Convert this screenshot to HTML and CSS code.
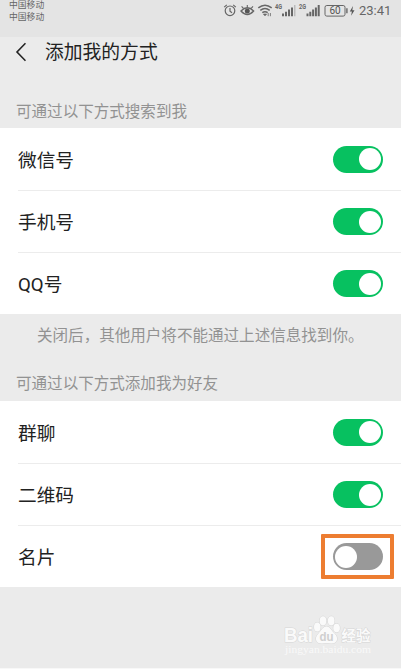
FILE: index.html
```html
<!DOCTYPE html>
<html lang="zh-CN">
<head>
  <meta charset="UTF-8" />
  <meta name="viewport" content="width=device-width, initial-scale=1.0" />
  <title>添加我的方式</title>
  <link rel="stylesheet" href="styles.css">
</head>
<body>

  <div class="status-bar">
    <div class="carrier">
      <div>中国移动</div>
      <div>中国移动</div>
    </div>
    <svg class="status-icons" width="134" height="18" viewBox="0 0 134 18" fill="none" stroke="#666">
      <!-- alarm -->
      <circle cx="7" cy="9.8" r="4.8" stroke-width="1.2" />
      <path d="M7 7v3.2l2 1.6M1.2 6.1l2.6-2.2M12.8 6.1l-2.6-2.2" stroke-width="1.2" />
      <!-- eye -->
      <path d="M18 10q6.3-6.5 12.6 0q-6.3 7-12.6 0z" stroke-width="1.4" />
      <circle cx="24.3" cy="10" r="2.5" fill="#555" stroke="none" />
      <path d="M24.3 6.5V4M20.4 7.3L18.6 5.3M28.2 7.3L30 5.3" stroke-width="1.1" />
      <!-- wifi -->
      <path d="M35.3 6.9q6.7-5.4 13.4 0M37.3 9.3q4.7-3.6 9.4 0M39.3 11.7q2.7-2 5.4 0" stroke-width="1.5" />
      <path d="M42 14.8l-1.500-1.700h3zM45.200 12v3.200M47.400 12v3.200" fill="#666" stroke-width=".8" />
      <!-- signal 4G / 2G -->
      <g fill="#666" stroke="none">
        <text class="net" x="52" y="7.8" textLength="7" lengthAdjust="spacingAndGlyphs">4G</text>
        <path d="M59 12.600h2v2.700h-2zM62 10.800h2v4.500h-2zM65 8.600h2v6.700h-2zM68 6.500h2v8.800h-2z" />
        <path class="weak" d="M71 4h1.500v11.300H71z" />
        <text class="net" x="76" y="7.8" textLength="7" lengthAdjust="spacingAndGlyphs">2G</text>
        <path d="M83.500 12.600h2v2.700h-2zM86.300 10.800h2v4.500h-2zM89.100 8.600h2v6.700h-2zM91.900 6.500h2v8.800h-2zM94.700 4h2v11.300h-2z" />
      </g>
      <!-- battery -->
      <rect x="102" y="4.500" width="20" height="10.600" rx="1.800" stroke-width="1" />
      <path d="M123.900 7.200v5" stroke-width="1.400" />
      <text class="level" x="112" y="13.300" fill="#555" stroke="none">60</text>
      <path d="M130 5l-3.200 5.500h2.100l-.8 4.300 3.400-5.600h-2.200z" fill="#555" stroke="none" />
    </svg>
    <div class="clock">23:41</div>
  </div>

  <div class="header">
    <svg class="back" width="12" height="20" viewBox="0 0 12 20" fill="none" stroke="#222" stroke-width="1.6">
      <path d="M11.500 1.200L3 10l8.500 8.800" />
    </svg>
    <div class="title">添加我的方式</div>
  </div>

  <div class="section-label">可通过以下方式搜索到我</div>
  <div class="list">
    <div class="row"><span>微信号</span><i class="switch on"></i></div>
    <div class="row"><span>手机号</span><i class="switch on"></i></div>
    <div class="row"><span>QQ号</span><i class="switch on"></i></div>
  </div>

  <div class="note">关闭后，其他用户将不能通过上述信息找到你。</div>
  <div class="section-label">可通过以下方式添加我为好友</div>
  <div class="list">
    <div class="row"><span>群聊</span><i class="switch on"></i></div>
    <div class="row"><span>二维码</span><i class="switch on"></i></div>
    <div class="row"><span>名片</span><div class="marker"><i class="switch"></i></div></div>
  </div>

  <div class="footer">
    <svg width="96" height="46" viewBox="0 0 96 46">
      <g class="mark">
        <text class="logo" x="1" y="27" textLength="29" lengthAdjust="spacingAndGlyphs">Bai</text>
        <ellipse cx="34.3" cy="12" rx="3.3" ry="4.5" />
        <ellipse cx="40" cy="5.800" rx="3.3" ry="4.6" />
        <ellipse cx="48.200" cy="5.800" rx="3.300" ry="4.600" />
        <ellipse cx="53.600" cy="13" rx="3.300" ry="4.300" />
        <path d="M43.500 11.500c-4 0-5 4-8 7-5 5-2 10.500 3.500 10q4.500-1 9 0c6.500 .5 8-6 3.500-10-3.500-3-4-7-8-7z" />
        <text class="logo jingyan" x="58.500" y="26" textLength="29">经验</text>
      </g>
      <text class="domain" x="2" y="38" textLength="86" lengthAdjust="spacingAndGlyphs">jingyan.baidu.com</text>
      <text class="du" x="36.500" y="25.500" textLength="14" lengthAdjust="spacingAndGlyphs">du</text>
    </svg>
  </div>

</body>
</html>
```
FILE: styles.css
```css
* {
  box-sizing: border-box;
}

body {
  margin: 0;
  height: 669px;
  overflow: hidden;
  display: flex;
  flex-direction: column;
  font-family: Roboto, "Noto Sans CJK SC", sans-serif;
  background-color: #ebebeb;
  color: #222;
}

.status-bar {
  display: flex;
  align-items: flex-start;
  height: 37px;
  padding-left: 9px;
  background-color: #e4e4e4;
  color: #666;
}

.carrier {
  width: 214px;
  margin-top: -1px;
  font-size: 8.8px;
  line-height: 12px;
}

.status-icons {
  margin-top: 1px;
  flex-shrink: 0;
}

.net {
  font-size: 6.5px;
  font-weight: bold;
}

.level {
  font-size: 10px;
  text-anchor: middle;
}

.weak {
  fill: #bbb;
}

.clock {
  margin-left: 2px;
  font-size: 13px;
  line-height: 22px;
}

.header {
  display: flex;
  align-items: center;
  height: 53px;
  padding: 0 0 22px 14px;
}

.back {
  margin-top: -2px;
}

.title {
  margin-left: 19px;
  font-size: 18.8px;
  line-height: 28px;
}

.section-label {
  height: 38px;
  padding-left: 16px;
  font-size: 15.55px;
  line-height: 44px;
  color: #929292;
}

.list {
  height: 186px;
  background-color: #fff;
}

.row {
  display: flex;
  align-items: center;
  justify-content: space-between;
  height: 62px;
  margin-left: 18px;
  padding-right: 18px;
  font-size: 18.7px;
}

.row span {
  margin-top: -2px;
}

.row + .row {
  border-top: 1px solid #ececec;
}

.switch {
  width: 50px;
  height: 27px;
  padding: 2.5px;
  border-radius: 14px;
  background-color: #999;
}

.switch::before {
  content: "";
  display: block;
  width: 22px;
  height: 22px;
  border-radius: 50%;
  background-color: #fff;
}

.switch.on {
  background-color: #07c160;
}

.switch.on::before {
  margin-left: 23px;
}

.marker {
  display: flex;
  align-items: center;
  justify-content: center;
  width: 73px;
  height: 45px;
  margin-right: -11px;
  border: 4px solid #ed7d31;
  border-radius: 1px;
}

.note {
  height: 49px;
  padding-left: 37px;
  font-size: 15.55px;
  line-height: 44px;
  color: #929292;
  white-space: nowrap;
}

.note + .section-label {
  line-height: 42px;
}

.footer {
  flex: 1;
  padding: 28px 0 0 283px;
  border-bottom: 1px solid #f8f8f8;
}

.mark {
  fill: #fafafa;
  stroke: #d6d6d6;
  stroke-width: 1px;
  paint-order: stroke;
}

.logo {
  font-family: "Liberation Sans", "Noto Sans CJK SC", sans-serif;
  font-size: 20px;
  font-weight: bold;
}

.jingyan {
  font-size: 14.5px;
}

.domain {
  font-family: "Liberation Serif", serif;
  font-size: 10px;
  fill: #f9f9f9;
}

.du {
  font-family: "Liberation Sans", sans-serif;
  font-size: 13px;
  font-weight: bold;
  fill: #cfcfcf;
}
```
